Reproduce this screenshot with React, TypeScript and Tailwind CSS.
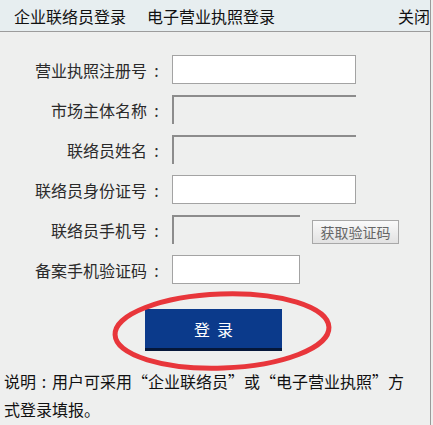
import React from 'react';

const font = { fontFamily: '"Noto Sans CJK SC", "Microsoft YaHei", sans-serif' };

const Colon = () => <span className="inline-block w-[19px] text-center">:</span>;

const Row: React.FC<{ label: string; children: React.ReactNode }> = ({ label, children }) => (
  <div className="flex items-center h-[29px]">
    <label className="w-[166px] text-right text-[16px] text-[#2a2a2a] whitespace-nowrap">
      {label}
      <Colon />
    </label>
    <div className="ml-[6px] flex items-center">{children}</div>
  </div>
);

const TextInput: React.FC<{ w: string }> = ({ w }) => (
  <input className={`${w} h-[29px] bg-white border border-[#a3a3a3] outline-none px-1`} />
);

const LockedInput: React.FC<{ w: string }> = ({ w }) => (
  <input
    disabled
    className={`${w} h-[29px] bg-[#eeefee] border-t-2 border-l-2 border-[#8c8c8c] outline-none px-1`}
  />
);

export default function App() {
  return (
    <div className="w-[433px] h-[425px] bg-[#eeefee] overflow-hidden" style={font}>
      <div className="relative w-[431px] h-full border-r border-[#9a9a9a]">
        <div className="flex items-center h-8 bg-[#e7eef0] border-b border-[#9c9c9c] text-[16px] text-[#111]">
          <span className="ml-[14px]">企业联络员登录</span>
          <span className="ml-[21px]">电子营业执照登录</span>
          <span className="ml-auto">关闭</span>
        </div>

        <div className="pt-[23px] flex flex-col gap-[11px]">
          <Row label="营业执照注册号">
            <TextInput w="w-[184px]" />
          </Row>
          <Row label="市场主体名称">
            <LockedInput w="w-[184px]" />
          </Row>
          <Row label="联络员姓名">
            <LockedInput w="w-[184px]" />
          </Row>
          <Row label="联络员身份证号">
            <TextInput w="w-[184px]" />
          </Row>
          <Row label="联络员手机号">
            <LockedInput w="w-[128px]" />
            <button className="ml-3 mt-[4px] w-[87px] h-[24px] border border-[#a8a8a8] bg-gradient-to-b from-[#fafafa] to-[#e2e2e2] text-[14px] text-[#666] leading-none">
              获取验证码
            </button>
          </Row>
          <Row label="备案手机验证码">
            <TextInput w="w-[128px]" />
          </Row>
        </div>

        <div className="flex justify-center pt-[25px] pr-[3px]">
          <button className="w-[137px] h-[42px] bg-[#0b3a8b] border-b-[3px] border-[#05173a] text-white text-[16px]">
            <span>登</span>
            <span className="ml-[7px]">录</span>
          </button>
        </div>

        <p className="mt-[16px] pl-1 w-[414px] text-[16px] leading-[28px] text-[#111]">
          说明<span className="inline-block w-[1em] text-center">:</span>用户可采用“企业联络员”或“电子营业执照”方式登录填报。
        </p>

        <svg className="absolute left-[110px] top-[289px] pointer-events-none" width="224" height="84" viewBox="0 0 224 84">
          <ellipse cx="112" cy="42" rx="107" ry="37" fill="none" stroke="#e8363b" strokeWidth="5" transform="rotate(-2 112 42)" />
        </svg>
      </div>
    </div>
  );
}
